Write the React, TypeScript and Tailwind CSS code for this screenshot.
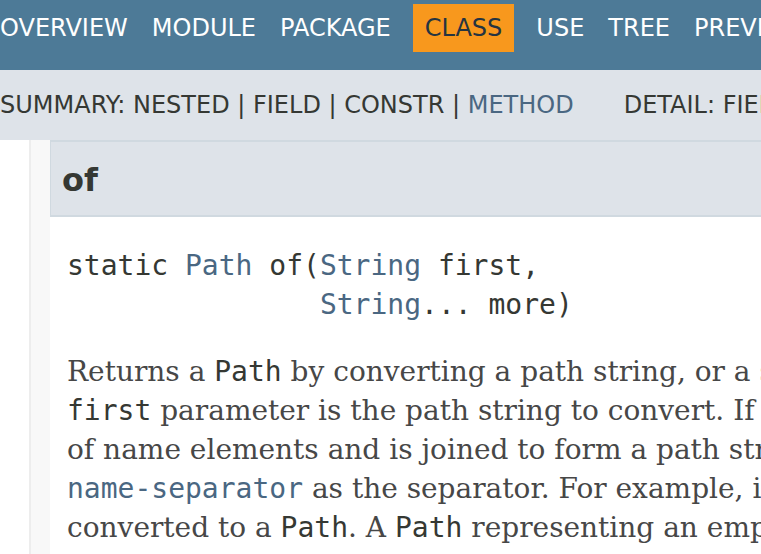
import React from "react";

const sans = "font-['DejaVu_Sans',sans-serif]";
const mono = "font-['DejaVu_Sans_Mono',monospace]";
const serif = "font-['DejaVu_Serif',serif]";

const navItems = ["Overview", "Module", "Package", "Class", "Use", "Tree", "Preview", "Deprecated", "Index", "Help"];

function Code({ children, link }: { children: React.ReactNode; link?: boolean }) {
    return (
        <code className={`${mono} ${link ? "text-[#4a6782]" : "text-[#353833]"}`}>{children}</code>
    );
}

export default function App() {
    return (
        <div className="w-[761px] h-[554px] overflow-hidden bg-white">
            <div className="w-[1600px]">
                <nav className={`h-[70px] bg-[#4d7a97] flex items-start pt-[4px] ${sans} text-[24px] uppercase`}>
                    {navItems.map((item, i) => (
                        <div
                            key={item}
                            className={
                                item === "Class"
                                    ? "h-[48px] flex items-center px-[12px] mx-[10px] bg-[#f8981d] text-[#253441]"
                                    : i === 0
                                      ? "h-[48px] flex items-center pr-[12px] text-white"
                                      : "h-[48px] flex items-center px-[12px] text-white"
                            }
                        >
                            {item}
                        </div>
                    ))}
                </nav>

                <div className={`h-[70px] bg-[#dee3e9] flex items-center ${sans} text-[24px] text-[#353833] whitespace-nowrap`}>
                    <span>
                        SUMMARY: NESTED | FIELD | CONSTR | <span className="text-[#4a6782]">METHOD</span>
                    </span>
                    <span className="ml-[50px]">DETAIL: FIELD | CONSTR | METHOD</span>
                </div>

                <div className="flex">
                    <div className="w-[29px] shrink-0" />
                    <div className="w-[21px] shrink-0 bg-[#f8f8f8] border-l-2 border-[#ededed]" />
                    <div className="flex-1 flex flex-col pb-[40px]">
                        <div className="h-[77px] shrink-0 bg-[#dee3e9] border-y-2 border-l border-[#d0d9e0] flex items-center pl-[11px]">
                            <h3 className={`${sans} font-bold text-[32px] text-[#353833] leading-none pt-[2px]`}>of</h3>
                        </div>

                        <div className={`${mono} text-[28px] leading-[39px] text-[#353833] pl-[17px] mt-[29px] whitespace-pre`}>
                            <div>
                                static <span className="text-[#4a6782]">Path</span> of(<span className="text-[#4a6782]">String</span> first,
                            </div>
                            <div>
                                {"               "}
                                <span className="text-[#4a6782]">String</span>... more)
                            </div>
                        </div>

                        <div className={`${serif} text-[28px] leading-[39px] text-[#474747] pl-[17px] mt-[28px] whitespace-nowrap`}>
                            <div>
                                Returns a <Code>Path</Code> by converting a path string, or a sequence of strings that when joined form a path string. If <Code>more</Code> does not specify any elements then the value of the
                            </div>
                            <div>
                                <Code>first</Code> parameter is the path string to convert. If <Code>more</Code> specifies one or more elements then each non-empty string, including <Code>first</Code>, is considered to be a sequence
                            </div>
                            <div>
                                of name elements and is joined to form a path string. The details as to how the Strings are joined is provider specific but typically they will be joined using the
                            </div>
                            <div>
                                <Code link>name-separator</Code> as the separator. For example, if the name separator is "/" and <Code>getPath("/foo","bar","gus")</Code> is invoked, then the path string <Code>"/foo/bar/gus"</Code> is
                            </div>
                            <div>
                                converted to a <Code>Path</Code>. A <Code>Path</Code> representing an empty path is returned if <Code>first</Code> is the empty string and <Code>more</Code> does not contain any non-empty strings.
                            </div>
                        </div>
                    </div>
                </div>
            </div>
        </div>
    );
}
